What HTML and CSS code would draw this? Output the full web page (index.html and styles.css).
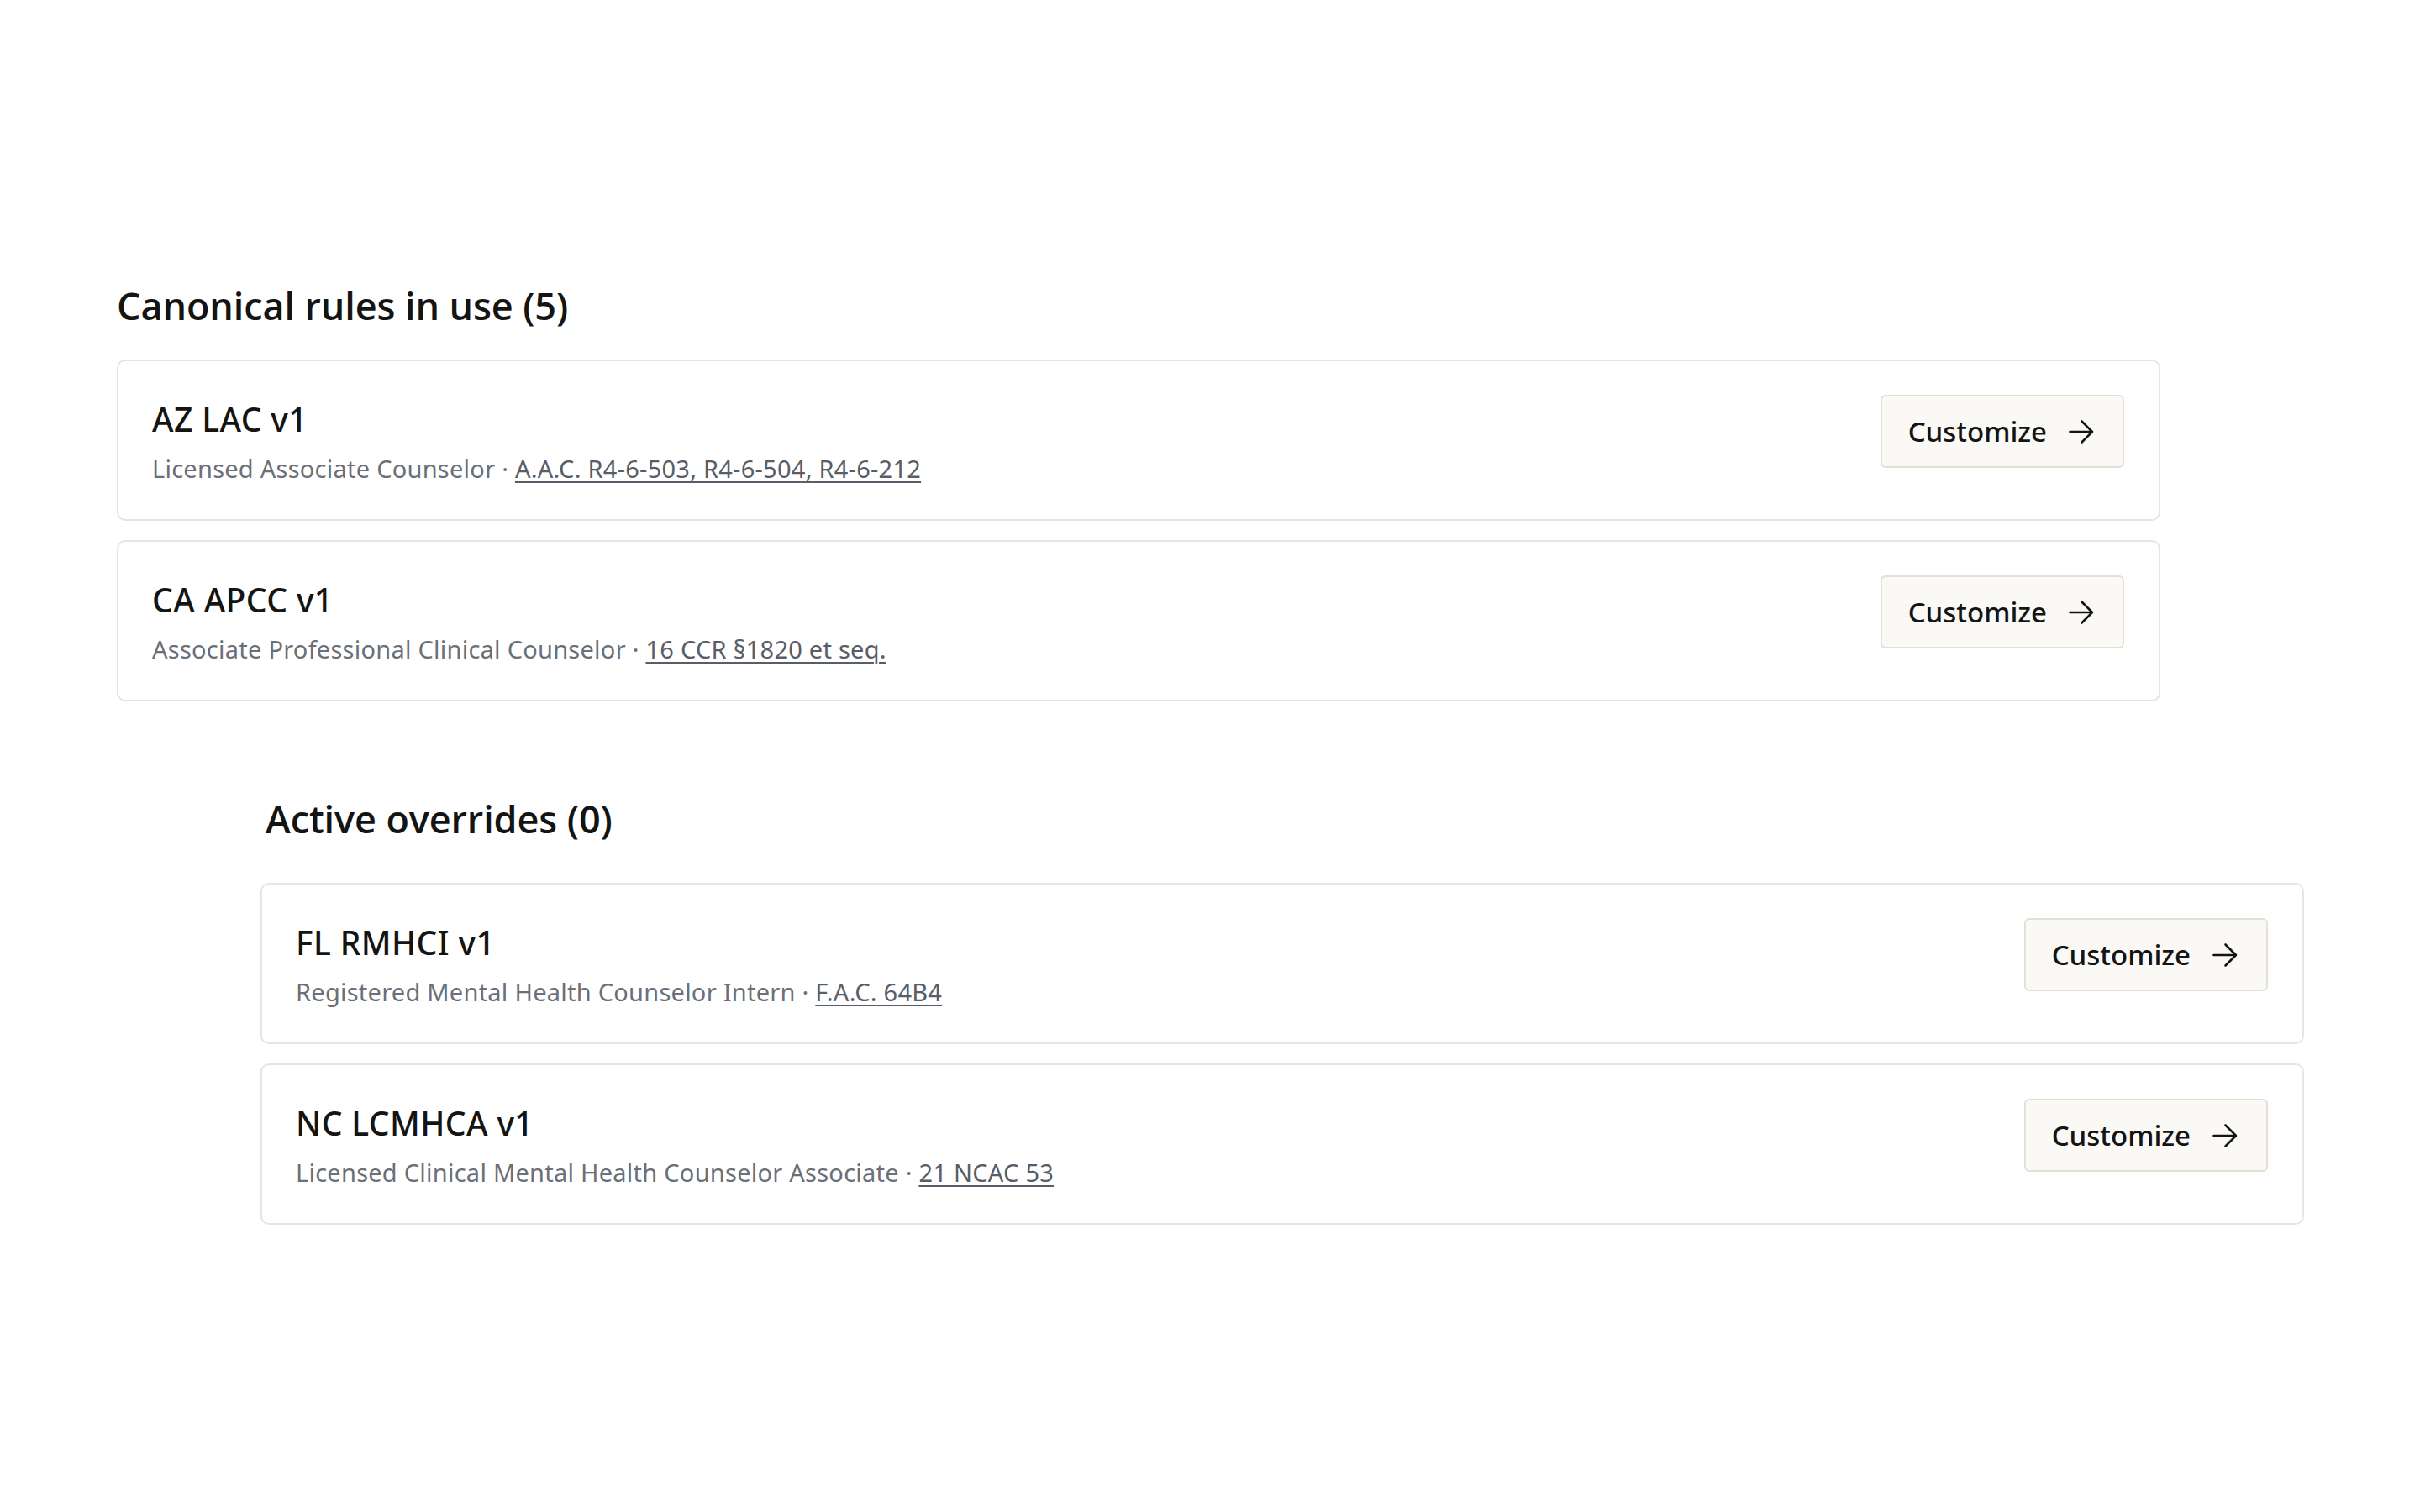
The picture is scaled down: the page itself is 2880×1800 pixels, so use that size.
FILE: index.html
```html
<!DOCTYPE html>
<html lang="en">
<head>
<meta charset="utf-8">
<title>Rules</title>
<link rel="stylesheet" href="styles.css">
</head>
<body>
<main class="page">
  <section class="section">
    <h2 class="section-title">Canonical rules in use (5)</h2>
    <div class="card-list">
      <div class="card">
        <div class="card-text">
          <div class="card-title">AZ LAC v1</div>
          <div class="card-sub">Licensed Associate Counselor · <a class="cite" href="#">A.A.C. R4-6-503, R4-6-504, R4-6-212</a></div>
        </div>
        <button class="btn" type="button">Customize <svg class="arrow" viewBox="0 0 30 30" width="30" height="30"><path d="M1.5 15H28M15.5 2.5L28 15L15.5 27.5" fill="none" stroke="currentColor" stroke-width="2.6" stroke-linecap="round" stroke-linejoin="round"/></svg></button>
      </div>
      <div class="card">
        <div class="card-text">
          <div class="card-title">CA APCC v1</div>
          <div class="card-sub">Associate Professional Clinical Counselor · <a class="cite" href="#">16 CCR §1820 et seq.</a></div>
        </div>
        <button class="btn" type="button">Customize <svg class="arrow" viewBox="0 0 30 30" width="30" height="30"><path d="M1.5 15H28M15.5 2.5L28 15L15.5 27.5" fill="none" stroke="currentColor" stroke-width="2.6" stroke-linecap="round" stroke-linejoin="round"/></svg></button>
      </div>
    </div>
  </section>
  <section class="section section-overrides">
    <h2 class="section-title">Active overrides (0)</h2>
    <div class="card-list">
      <div class="card">
        <div class="card-text">
          <div class="card-title">FL RMHCI v1</div>
          <div class="card-sub">Registered Mental Health Counselor Intern · <a class="cite" href="#">F.A.C. 64B4</a></div>
        </div>
        <button class="btn" type="button">Customize <svg class="arrow" viewBox="0 0 30 30" width="30" height="30"><path d="M1.5 15H28M15.5 2.5L28 15L15.5 27.5" fill="none" stroke="currentColor" stroke-width="2.6" stroke-linecap="round" stroke-linejoin="round"/></svg></button>
      </div>
      <div class="card">
        <div class="card-text">
          <div class="card-title">NC LCMHCA v1</div>
          <div class="card-sub">Licensed Clinical Mental Health Counselor Associate · <a class="cite" href="#">21 NCAC 53</a></div>
        </div>
        <button class="btn" type="button">Customize <svg class="arrow" viewBox="0 0 30 30" width="30" height="30"><path d="M1.5 15H28M15.5 2.5L28 15L15.5 27.5" fill="none" stroke="currentColor" stroke-width="2.6" stroke-linecap="round" stroke-linejoin="round"/></svg></button>
      </div>
    </div>
  </section>
</main>
</body>
</html>
```

FILE: styles.css
```css
html, body {
  margin: 0;
  padding: 0;
  background: #ffffff;
}

body {
  font-family: "Noto Sans", "Liberation Sans", sans-serif;
  color: #141413;
}

.page {
  padding: 334px 0 0 139px;
}

.section {
  width: 2432px;
}

.section-overrides {
  margin-left: 171px;
  margin-top: 110px;
}

.section-title {
  margin: 0 0 34px 0;
  font-family: "Open Sans", "Noto Sans", sans-serif;
  font-weight: 600;
  font-size: 45px;
  line-height: 60px;
  letter-spacing: -0.1px;
  color: #141413;
}

.section-overrides .section-title {
  margin-bottom: 46px;
  padding-left: 6px;
}

.card-list {
  display: flex;
  flex-direction: column;
  gap: 23px;
}

.card {
  display: flex;
  justify-content: space-between;
  align-items: flex-start;
  border: 2px solid #e8e6dc;
  border-radius: 10px;
  padding: 40px 41px 40px 40px;
  background: #ffffff;
}

.card-text {
  padding-top: 4px;
  display: flex;
  flex-direction: column;
}

.card-title {
  font-size: 39px;
  font-weight: 500;
  line-height: 50px;
  letter-spacing: 0.4px;
  color: #141413;
}

.card-sub {
  margin-top: 14px;
  font-size: 29px;
  line-height: 40px;
  letter-spacing: 0.25px;
  color: #6b6f78;
}

.cite {
  color: #585d68;
  text-decoration: underline;
  text-decoration-thickness: 2px;
  text-underline-offset: 4px;
}

.btn {
  display: flex;
  align-items: center;
  gap: 26px;
  height: 87px;
  padding: 0 34px 0 31px;
  border: 2px solid #e3e0d4;
  border-radius: 6px;
  background: #faf9f5;
  font-family: "Noto Sans", "Liberation Sans", sans-serif;
  font-size: 33px;
  font-weight: 500;
  color: #141413;
  cursor: pointer;
}

.arrow {
  display: block;
  width: 30px;
  height: 30px;
}
```
